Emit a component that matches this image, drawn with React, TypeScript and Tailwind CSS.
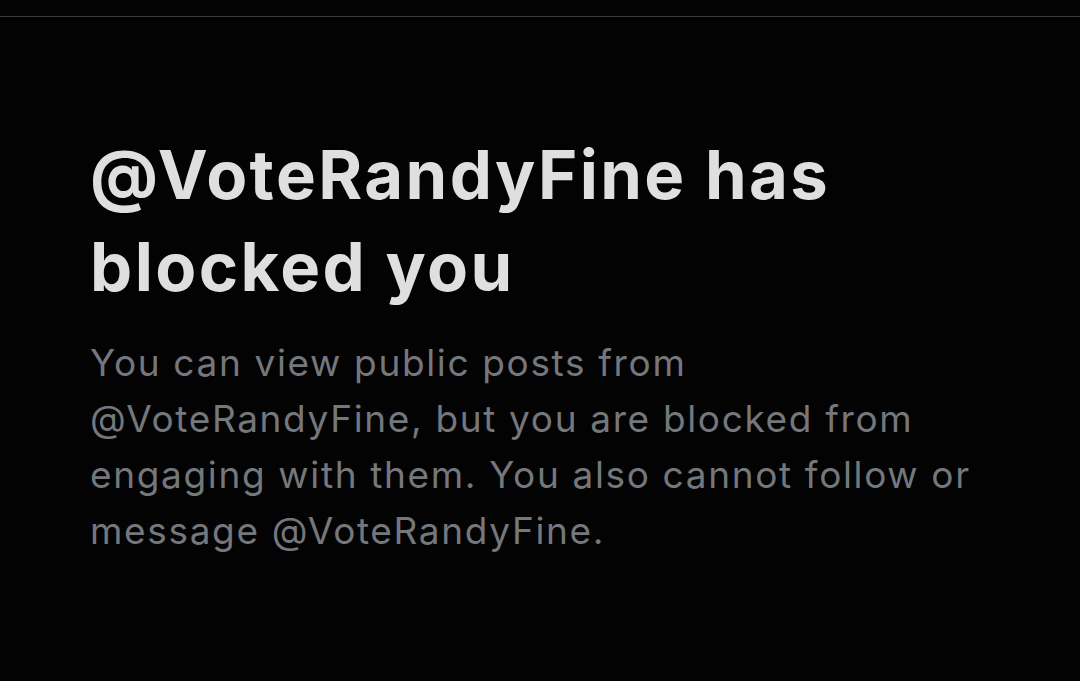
import React from 'react';

const handle = '@VoteRandyFine';

const BlockedNotice = () => {
  return (
    <div className="pl-[90px] pt-[112px]">
      <h1
        className="text-[67px] leading-[92px] font-bold text-[#dfdfdf] tracking-[2.4px]"
        style={{ fontFamily: 'Inter, "Liberation Sans", sans-serif' }}
      >
        {handle} has
        <br />
        blocked you
      </h1>
      <p
        className="mt-[22px] text-[37px] leading-[56px] text-[#74777c] tracking-[1.65px]"
        style={{ fontFamily: 'Inter, "Noto Sans", sans-serif' }}
      >
        You can view public posts from
        <br />
        {handle}, but you are blocked from
        <br />
        engaging with them. You also cannot follow or
        <br />
        message {handle}.
      </p>
    </div>
  );
};

export default function App() {
  return (
    <div className="w-[1080px] h-[681px] bg-[#030303] overflow-hidden">
      <div className="h-4" />
      <div className="border-t border-[#3a3a3a]">
        <BlockedNotice />
      </div>
    </div>
  );
}
